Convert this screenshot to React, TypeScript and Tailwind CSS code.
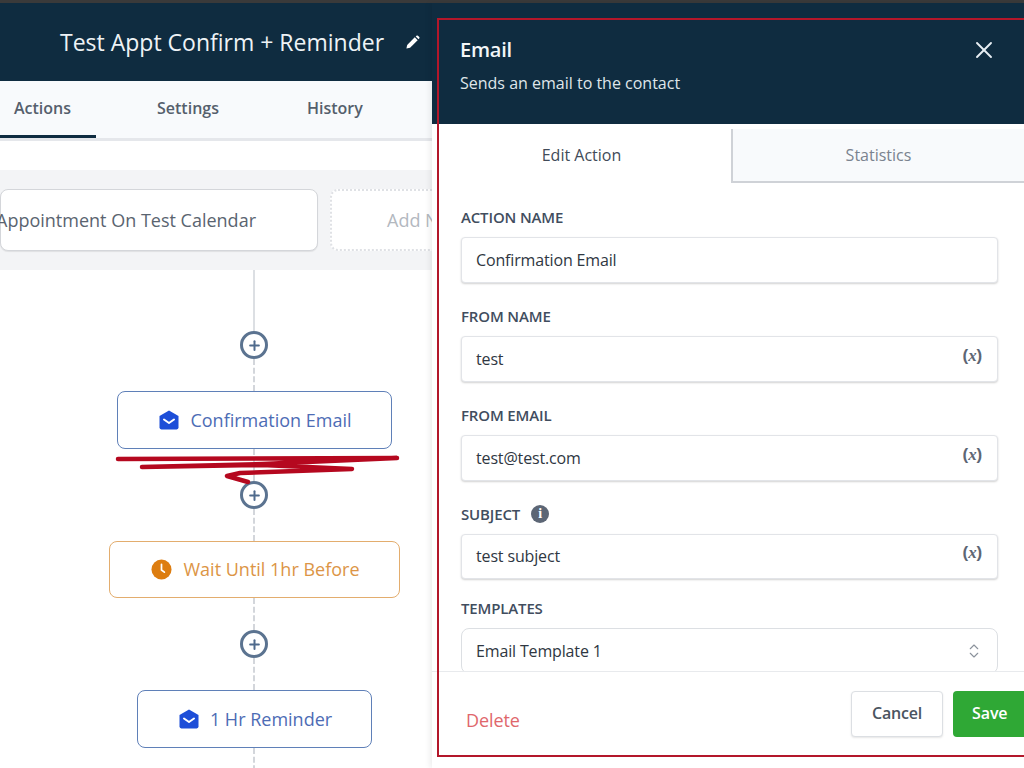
import { ChevronsUpDown, Plus, X } from "lucide-react";

const font = "font-['Open_Sans',sans-serif]";

function OpenMail({ className }: { className?: string }) {
  return (
    <svg viewBox="0 0 20 20" className={className} fill="currentColor">
      <path d="M10 0.6 L19.5 6 V17.6 Q19.5 19.4 17.7 19.4 H2.3 Q0.5 19.4 0.5 17.6 V6 Z" />
      <path d="M5 9.5 L10 13 L15 9.5" fill="none" stroke="#fff" strokeWidth="2" strokeLinecap="round" strokeLinejoin="round" />
    </svg>
  );
}

function ClockFill() {
  return (
    <svg viewBox="0 0 22 22" className="w-[21px] h-[21px] text-[#dd7d10]" fill="currentColor">
      <circle cx="11" cy="11" r="10.5" />
      <path d="M11 5.5 V11.5 L14 13.8" fill="none" stroke="#fff" strokeWidth="1.8" strokeLinecap="round" strokeLinejoin="round" />
    </svg>
  );
}

function AddNode() {
  return (
    <div className="w-7 h-7 rounded-full border-[3px] border-[#5b7390] bg-white flex items-center justify-center shrink-0">
      <Plus size={15} strokeWidth={3.2} className="text-[#4f6a8c]" />
    </div>
  );
}

function Dash({ h }: { h: number }) {
  return <div className="w-0 border-l-2 border-dashed border-[#d3d6db]" style={{ height: h }} />;
}

function StepCard({
  label,
  icon,
  tone,
  size,
}: {
  label: string;
  icon: React.ReactNode;
  tone: "blue" | "orange";
  size: string;
}) {
  return (
    <div
      className={`${size} pl-[3px] bg-white rounded-lg border flex items-center justify-center gap-[11px] text-[18px] shrink-0 ${
        tone === "blue" ? "border-[#5f80b8] text-[#4d6cb5]" : "border-[#e3ad6e] text-[#dc9546]"
      }`}
    >
      {icon}
      <span>{label}</span>
    </div>
  );
}

function Variable() {
  return (
    <span className="text-[17px] font-semibold text-[#5d6674] -mt-[7px] font-['Liberation_Sans',sans-serif]">
      (<span className="italic font-bold font-['Liberation_Serif',serif]">x</span>)
    </span>
  );
}

function Field({
  label,
  value,
  variable,
  info,
  height = "h-[46px]",
}: {
  label: string;
  value: string;
  variable?: boolean;
  info?: boolean;
  height?: string;
}) {
  return (
    <div>
      <div className="flex items-center gap-[11px] h-5 mb-[10px]">
        <span className="text-[15px] font-semibold text-[#414d5e] tracking-[-0.15px]">{label}</span>
        {info && (
          <span className="w-[18px] h-[18px] rounded-full bg-[#5c6675] text-white flex items-center justify-center text-[14px] font-bold leading-none font-['Liberation_Serif',serif]">
            i
          </span>
        )}
      </div>
      <div className={`${height} bg-white rounded border border-[#e2e4e8] shadow-[0_1px_2px_rgba(0,0,0,0.18)] pl-[14px] pr-[15px] flex items-center justify-between text-[16px] text-[#2f3742] tracking-[-0.15px]`}>
        <span className="-mt-[1px]">{value}</span>
        {variable && <Variable />}
      </div>
    </div>
  );
}

export default function App() {
  return (
    <div className={`relative w-[1024px] h-[768px] overflow-hidden bg-white ${font}`}>
      <div className="h-[3px] bg-[#3a3a3a]" />
      <div className="flex h-[765px]">
        {/* Workflow side */}
        <div className="w-[432px] shrink-0 overflow-hidden flex flex-col">
          <div className="h-[78px] bg-[#0f2c40] flex items-center pl-[60px] text-[23px] text-[#eef3f6] shrink-0">
            <span>Test Appt Confirm + Reminder</span>
            <svg viewBox="0 0 16 16" className="w-[15px] h-[15px] ml-[21px] text-white" fill="currentColor">
              <path d="M1.5 14.5 L2.3 10.6 L10.4 2.5 L13.5 5.6 L5.4 13.7 Z" />
              <path d="M11.4 1.5 L12.6 0.6 Q13.2 0.2 13.8 0.8 L15.2 2.2 Q15.8 2.8 15.3 3.4 L14.5 4.6 Z" />
            </svg>
          </div>
          <div className="h-[60px] bg-[#f8fafc] border-b-[3px] border-[#e5e7eb] flex text-[16px] font-semibold text-[#555f6c] shrink-0">
            <div className="w-[96px] h-[57px] border-b-[3px] border-[#0f2c40] pl-[14px] flex items-center">
              <span className="-mt-[1px]">Actions</span>
            </div>
            <div className="w-[147px] h-[54px] flex items-center pl-[61px]">
              <span className="-mt-[1px]">Settings</span>
            </div>
            <div className="h-[54px] flex items-center pl-[64px]">
              <span className="-mt-[1px]">History</span>
            </div>
          </div>
          <div className="h-[29px] shrink-0" />
          <div className="h-[100px] bg-[#f3f4f6] flex items-center gap-3 shrink-0">
            <div className="w-[318px] h-[62px] shrink-0 bg-white rounded-lg border border-[#d4d6da] shadow-[0_1px_1px_rgba(0,0,0,0.08)] flex items-center justify-end pr-[61px] text-[18px] text-[#5a6470] whitespace-nowrap">
              <span>Appointment On Test Calendar</span>
            </div>
            <div className="w-[160px] h-[62px] shrink-0 bg-white rounded-lg border-2 border-dotted border-[#dfe1e5] flex items-center pl-[55px] text-[18px] text-[#b3b8bf] whitespace-nowrap">
              Add N
            </div>
          </div>
          <div className="w-[508px] flex flex-col items-center">
            <div className="w-0 h-[61px] border-l-2 border-[#dcdfe3]" />
            <AddNode />
            <Dash h={32} />
            <StepCard size="w-[275px] h-[58px]" tone="blue" label="Confirmation Email" icon={<OpenMail className="w-5 h-5 text-[#1d4ed8]" />} />
            <Dash h={32} />
            <AddNode />
            <Dash h={32} />
            <StepCard size="w-[291px] h-[57px]" tone="orange" label="Wait Until 1hr Before" icon={<ClockFill />} />
            <Dash h={32} />
            <AddNode />
            <Dash h={32} />
            <StepCard size="w-[235px] h-[58px]" tone="blue" label="1 Hr Reminder" icon={<OpenMail className="w-5 h-5 text-[#1d4ed8]" />} />
            <Dash h={32} />
          </div>
        </div>

        {/* Email action panel */}
        <div className="w-[592px] shrink-0 flex flex-col shadow-[-2px_0_6px_rgba(0,0,0,0.08)] bg-white">
          <div className="h-[121px] bg-[#0f2c40] shrink-0 pl-[28px] pr-[26px] pt-[34px] flex justify-between">
            <div>
              <div className="text-[20px] leading-[26px] font-semibold text-[#f3f6f8] tracking-[-0.2px]">Email</div>
              <div className="text-[16px] leading-5 mt-[10px] text-[#dfe6ea]">Sends an email to the contact</div>
            </div>
            <X size={28} strokeWidth={1.6} className="text-[#e8eff4] -mt-[1px]" />
          </div>
          <div className="h-[59px] flex shrink-0 text-[16px]">
            <div className="w-[299px] pt-[3px] flex items-center justify-center text-[#414b58]">Edit Action</div>
            <div className="flex-1 mt-[5px] bg-[#f8fafc] border-l-2 border-b-2 border-[#cfd2d7] flex items-center justify-center text-[#7a838f]">
              Statistics
            </div>
          </div>
          <div className="h-[488px] overflow-hidden pl-[29px] pr-[26px] pt-[24px] flex flex-col gap-[23px] shrink-0">
            <Field label="ACTION NAME" value="Confirmation Email" />
            <Field label="FROM NAME" value="test" variable />
            <Field label="FROM EMAIL" value="test@test.com" variable />
            <Field label="SUBJECT" value="test subject" variable info height="h-[45px]" />
            <div className="-mt-[4px] relative">
              <div className="flex items-center h-5 mb-[10px]">
                <span className="text-[15px] font-semibold text-[#414d5e] tracking-[-0.15px]">TEMPLATES</span>
              </div>
              <div className="h-[46px] bg-white rounded-lg border border-[#dcdfe3] pl-[14px] pr-[14px] flex items-center justify-between text-[16px] text-[#2f3742] tracking-[-0.15px]">
                <span className="-mt-[1px]">Email Template 1</span>
                <ChevronsUpDown size={18} strokeWidth={1.5} className="text-[#8b929c]" />
              </div>
            </div>
          </div>
          <div className="flex-1 border-t border-[#e8eaed] bg-white flex items-start pt-[19px] pl-[34px] gap-[10px]">
            <span className="text-[18px] text-[#e0676c] mt-[16px] tracking-[-0.1px] mr-auto">Delete</span>
            <div className="w-[92px] h-[46px] rounded border border-[#dcdfe3] bg-white shadow-[0_1px_2px_rgba(0,0,0,0.1)] flex items-center justify-center text-[16px] font-semibold text-[#4a5460] tracking-[-0.2px]">
              <span className="-mt-[2px]">Cancel</span>
            </div>
            <div className="w-[71px] h-[46px] rounded-l bg-[#2fa835] flex items-center pl-[19px] text-[16px] font-semibold text-white tracking-[-0.1px]">
              <span className="-mt-[2px]">Save</span>
            </div>
          </div>
        </div>
      </div>

      {/* Red annotation marks drawn over the screenshot */}
      <div className="absolute left-[437px] top-[18px] w-[600px] h-[739px] border-2 border-[#b3172a] pointer-events-none" />
      <svg className="absolute left-0 top-0 w-[1024px] h-[768px] pointer-events-none" viewBox="0 0 1024 768" fill="none">
        <path
          d="M118 459 L397 458 L262 464 L142 467 L262 465 L352 469 L240 473 L227 476 L248 482"
          stroke="#b5081f"
          strokeWidth="4.5"
          strokeLinecap="round"
          strokeLinejoin="round"
        />
      </svg>
    </div>
  );
}
